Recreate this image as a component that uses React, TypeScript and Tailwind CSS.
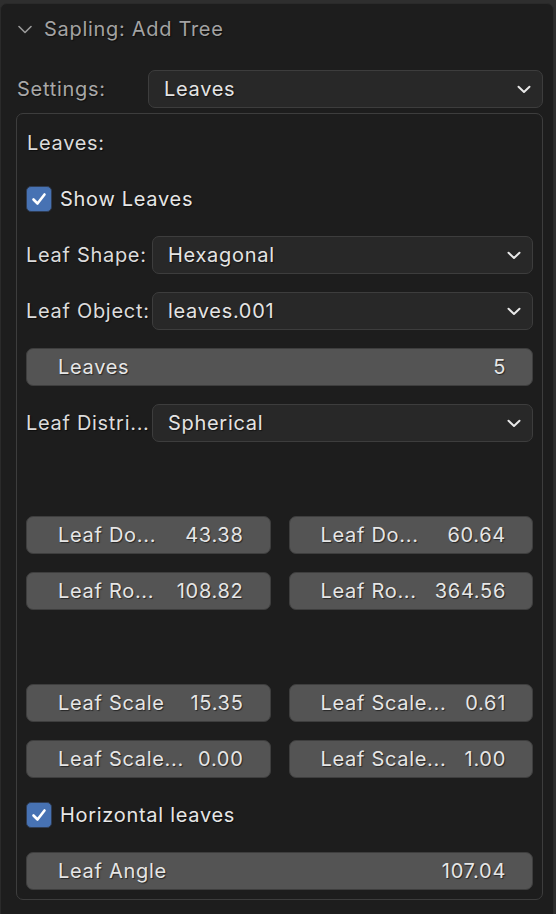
import React from "react";

const font = "font-['Inter','Noto_Sans',sans-serif] tracking-[0.7px]";
const shadow = "[text-shadow:1px_1px_1px_rgba(0,0,0,0.55)]";

function Chevron({ className = "" }: { className?: string }) {
  return (
    <svg width="14" height="9" viewBox="0 0 14 9" className={className}>
      <path d="M1.5 1.8 L7 7 L12.5 1.8" fill="none" stroke="currentColor" strokeWidth="2" strokeLinecap="round" strokeLinejoin="round" />
    </svg>
  );
}

function Dropdown({ value, pl = "pl-[15px]" }: { value: string; pl?: string }) {
  return (
    <div className={`flex-1 h-[38px] rounded-[7px] bg-[#282828] border border-[#3d3d3d] flex items-center ${pl} pr-[11px] text-[#e4e4e4]`}>
      <span className={`flex-1 ${shadow}`}>{value}</span>
      <Chevron className="text-[#e8e8e8]" />
    </div>
  );
}

function Row({ children }: { children: React.ReactNode }) {
  return <div className="h-[56px] flex items-center">{children}</div>;
}

function Num({ label, value }: { label: string; value: string }) {
  return (
    <div className="flex-1 h-[38px] rounded-[7px] bg-[#545454] border border-[#3e3e3e] flex items-center justify-between pl-[31px] pr-[26px] text-[#e6e6e6] whitespace-nowrap">
      <span className={shadow}>{label}</span>
      <span className={shadow}>{value}</span>
    </div>
  );
}

function Check({ label }: { label: string }) {
  return (
    <div className="flex items-center gap-[8px]">
      <div className="w-[26px] h-[26px] rounded-[5px] bg-[#4772b3] border border-[#2f3d55] flex items-center justify-center">
        <svg width="18" height="18" viewBox="0 0 18 18">
          <path d="M3.5 9.5 L7.5 13.5 L14.5 4.5" fill="none" stroke="#ffffff" strokeWidth="2.6" strokeLinecap="round" strokeLinejoin="round" />
        </svg>
      </div>
      <span className={`text-[#e6e6e6] ${shadow}`}>{label}</span>
    </div>
  );
}

function LabeledDrop({ label, value }: { label: string; value: string }) {
  return (
    <Row>
      <div className={`w-[126px] text-[#dcdcdc] whitespace-nowrap ${shadow}`}>{label}</div>
      <Dropdown value={value} />
    </Row>
  );
}

export default function App() {
  return (
    <div className={`w-[556px] h-[914px] bg-[#2e2e2e] pt-[3px] overflow-hidden text-[20px] ${font}`}>
      <div className="w-[554px] h-[930px] bg-[#1d1d1d] border border-[#2a2a2a] rounded-t-[7px] pl-[15px] pr-[10px]">
        <div className="h-[50px] flex items-center gap-[12px] pl-[2px] text-[#a3a3a3]">
          <svg width="14" height="9" viewBox="0 0 14 9">
            <path d="M1 1.5 L7 7.5 L13 1.5" fill="none" stroke="#9a9a9a" strokeWidth="1.6" strokeLinecap="round" strokeLinejoin="round" />
          </svg>
          <span className={shadow}>Sapling: Add Tree</span>
        </div>
        <div className="mt-[16px] h-[38px] flex items-center">
          <div className={`w-[132px] pl-[1px] text-[#a8a8a8] ${shadow}`}>Settings:</div>
          <Dropdown value="Leaves" />
        </div>
        <div className="mt-[5px] w-[527px] border border-[#3d3d3d] rounded-[7px] px-[9px] pt-[1px] pb-0">
          <Row>
            <span className={`pl-[1px] text-[#dcdcdc] ${shadow}`}>Leaves:</span>
          </Row>
          <Row>
            <Check label="Show Leaves" />
          </Row>
          <LabeledDrop label="Leaf Shape:" value="Hexagonal" />
          <LabeledDrop label="Leaf Object:" value="leaves.001" />
          <Row>
            <Num label="Leaves" value="5" />
          </Row>
          <LabeledDrop label="Leaf Distri..." value="Spherical" />
          <Row>{null}</Row>
          <Row>
            <div className="flex w-full gap-[18px]">
              <Num label="Leaf Do..." value="43.38" />
              <Num label="Leaf Do..." value="60.64" />
            </div>
          </Row>
          <Row>
            <div className="flex w-full gap-[18px]">
              <Num label="Leaf Ro..." value="108.82" />
              <Num label="Leaf Ro..." value="364.56" />
            </div>
          </Row>
          <Row>{null}</Row>
          <Row>
            <div className="flex w-full gap-[18px]">
              <Num label="Leaf Scale" value="15.35" />
              <Num label="Leaf Scale..." value="0.61" />
            </div>
          </Row>
          <Row>
            <div className="flex w-full gap-[18px]">
              <Num label="Leaf Scale..." value="0.00" />
              <Num label="Leaf Scale..." value="1.00" />
            </div>
          </Row>
          <Row>
            <Check label="Horizontal leaves" />
          </Row>
          <Row>
            <Num label="Leaf Angle" value="107.04" />
          </Row>
        </div>
      </div>
    </div>
  );
}
